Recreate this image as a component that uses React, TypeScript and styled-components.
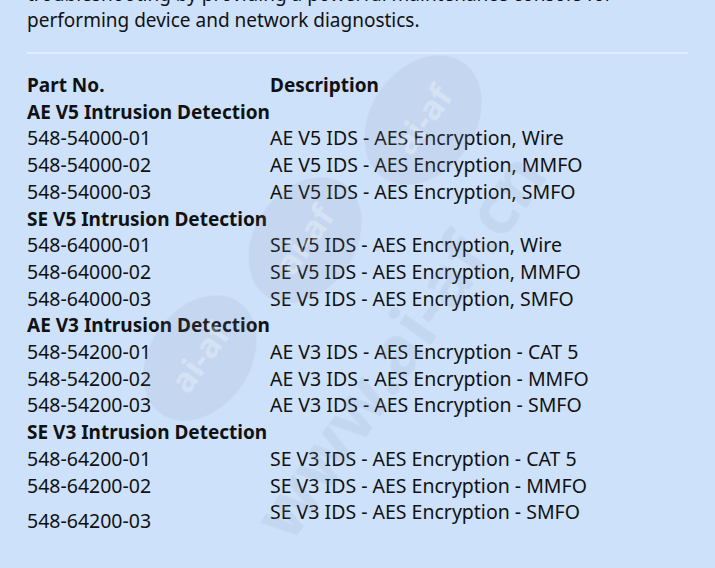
import React from "react";
import styled, { createGlobalStyle } from "styled-components";

const Global = createGlobalStyle`
  html, body { margin: 0; padding: 0; background: #cde1fb; }
  body { width: 715px; height: 568px; overflow: hidden; }
`;

const Page = styled.div`
  position: relative;
  width: 715px;
  height: 568px;
  overflow: hidden;
  background: #cde1fb;
  font-family: "Noto Sans", "Open Sans", sans-serif;
  color: #111;
  font-size: 19.5px;
`;

const Content = styled.div`
  padding: 0 27px;
  margin-top: -19px;
`;

const Intro = styled.p`
  margin: 0;
  font-size: 19px;
  line-height: 26px;
  padding-bottom: 19px;
  border-bottom: 2px solid #e2eefe;
  width: 661px;
`;

const Table = styled.table`
  border-collapse: collapse;
  margin-top: 18px;
`;

const Cell = styled.td<{ $bold?: boolean; $tall?: boolean; $align?: string }>`
  padding: 0;
  height: ${(p) => (p.$tall ? "44px" : "26.7px")};
  line-height: 26.7px;
  font-size: ${(p) => (p.$bold ? "19px" : "19.5px")};
  font-weight: ${(p) => (p.$bold ? 700 : 400)};
  vertical-align: ${(p) => p.$align || "middle"};
  white-space: nowrap;
`;

const PartCell = styled(Cell)`
  width: 243px;
`;

const Overlay = styled.div`
  position: absolute;
  inset: 0;
  pointer-events: none;
`;

type Row = { part: string; desc: string };
type Group = { title: string; rows: Row[] };

const groups: Group[] = [
  {
    title: "AE V5 Intrusion Detection",
    rows: [
      { part: "548-54000-01", desc: "AE V5 IDS - AES Encryption, Wire" },
      { part: "548-54000-02", desc: "AE V5 IDS - AES Encryption, MMFO" },
      { part: "548-54000-03", desc: "AE V5 IDS - AES Encryption, SMFO" },
    ],
  },
  {
    title: "SE V5 Intrusion Detection",
    rows: [
      { part: "548-64000-01", desc: "SE V5 IDS - AES Encryption, Wire" },
      { part: "548-64000-02", desc: "SE V5 IDS - AES Encryption, MMFO" },
      { part: "548-64000-03", desc: "SE V5 IDS - AES Encryption, SMFO" },
    ],
  },
  {
    title: "AE V3 Intrusion Detection",
    rows: [
      { part: "548-54200-01", desc: "AE V3 IDS - AES Encryption - CAT 5" },
      { part: "548-54200-02", desc: "AE V3 IDS - AES Encryption - MMFO" },
      { part: "548-54200-03", desc: "AE V3 IDS - AES Encryption - SMFO" },
    ],
  },
  {
    title: "SE V3 Intrusion Detection",
    rows: [
      { part: "548-64200-01", desc: "SE V3 IDS - AES Encryption - CAT 5" },
      { part: "548-64200-02", desc: "SE V3 IDS - AES Encryption - MMFO" },
      { part: "548-64200-03", desc: "SE V3 IDS - AES Encryption - SMFO" },
    ],
  },
];

const Watermark = () => (
  <svg width="715" height="568" viewBox="0 0 715 568">
    <g fill="#8a96a8" opacity="0.13">
      <ellipse cx="423" cy="120" rx="70" ry="52" transform="rotate(-55 423 120)" />
      <ellipse cx="305" cy="240" rx="68" ry="50" transform="rotate(-55 305 240)" />
      <ellipse cx="200" cy="358" rx="68" ry="50" transform="rotate(-55 200 358)" />
    </g>
    <g fill="#ffffff" opacity="0.3" fontFamily="Noto Sans, sans-serif" fontWeight="700" fontSize="34">
      <text x="423" y="132" textAnchor="middle" transform="rotate(-55 423 120)">ai-af</text>
      <text x="305" y="252" textAnchor="middle" transform="rotate(-55 305 240)">ai-af</text>
      <text x="200" y="370" textAnchor="middle" transform="rotate(-55 200 358)">ai-af</text>
    </g>
    <text
      x="420"
      y="360"
      textAnchor="middle"
      fill="#8a96a8"
      opacity="0.13"
      fontFamily="Noto Sans, sans-serif"
      fontWeight="700"
      fontSize="70"
      transform="rotate(-55 420 360)"
    >
      www.ai-af.cn
    </text>
  </svg>
);

export default function App() {
  return (
    <Page>
      <Global />
      <Content>
        <Intro>
          troubleshooting by providing a powerful maintenance console for performing device and network diagnostics.
        </Intro>
        <Table>
          <tbody>
            <tr>
              <PartCell $bold>Part No.</PartCell>
              <Cell $bold>Description</Cell>
            </tr>
            {groups.map((g, gi) => (
              <React.Fragment key={g.title}>
                <tr>
                  <Cell $bold colSpan={2}>{g.title}</Cell>
                </tr>
                {g.rows.map((r, ri) => {
                  const tall = gi === groups.length - 1 && ri === g.rows.length - 1;
                  return (
                    <tr key={r.part}>
                      <PartCell $tall={tall}>{r.part}</PartCell>
                      <Cell $tall={tall} $align={tall ? "top" : "middle"}>{r.desc}</Cell>
                    </tr>
                  );
                })}
              </React.Fragment>
            ))}
          </tbody>
        </Table>
      </Content>
      <Overlay>
        <Watermark />
      </Overlay>
    </Page>
  );
}
